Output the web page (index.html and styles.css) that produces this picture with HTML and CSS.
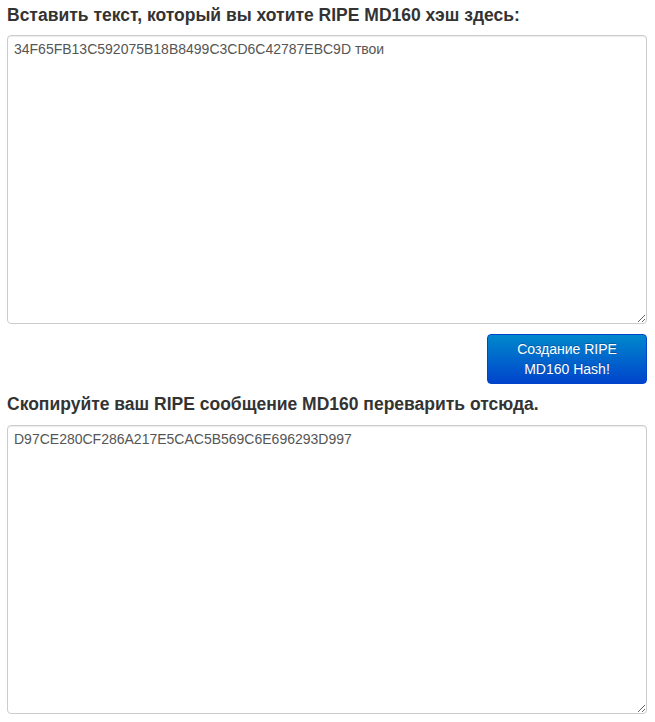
FILE: index.html
```html
<!DOCTYPE html>
<html>
<head>
<meta charset="utf-8">
<link rel="stylesheet" href="styles.css">
</head>
<body>
<div class="page">
  <h4 class="label">Вставить текст, который вы хотите RIPE MD160 хэш здесь:</h4>
  <textarea class="box">34F65FB13C592075B18B8499C3CD6C42787EBC9D твои</textarea>
  <div class="actions">
    <button class="btn">Создание RIPE<br>MD160 Hash!</button>
  </div>
  <h4 class="label label2">Скопируйте ваш RIPE сообщение MD160 переварить отсюда.</h4>
  <textarea class="box">D97CE280CF286A217E5CAC5B569C6E696293D997</textarea>
</div>
</body>
</html>
```
FILE: styles.css
```css
html, body { margin: 0; padding: 0; background: #fff; }
body { font-family: "Liberation Sans", Arial, sans-serif; color: #333; }
.page { padding: 0 8px 0 7px; display: flex; flex-direction: column; }
.label { margin: 5px 0 10px; font-size: 17.5px; line-height: 20px; font-weight: bold; color: #333; }
.label2 { margin-top: 10px; margin-bottom: 11px; }
.box {
  box-sizing: border-box; width: 100%; height: 289px;
  border: 1px solid #ccc; border-radius: 4px;
  box-shadow: inset 0 1px 1px rgba(0,0,0,0.075);
  padding: 3px 6px 5px; font-family: "Liberation Sans", Arial, sans-serif;
  font-size: 14px; line-height: 20px; color: #555; resize: vertical; margin: 0;
}
.actions { display: flex; justify-content: flex-end; margin-top: 10px; }
.btn {
  width: 160px; height: 50px; border: 1px solid #04c; border-radius: 4px;
  background: linear-gradient(#0088cc, #0044cc); color: #fff;
  font-family: "Liberation Sans", Arial, sans-serif; font-size: 14px; line-height: 20px;
  padding: 4px 10px; text-shadow: 0 -1px 0 rgba(0,0,0,0.25);
}
```
